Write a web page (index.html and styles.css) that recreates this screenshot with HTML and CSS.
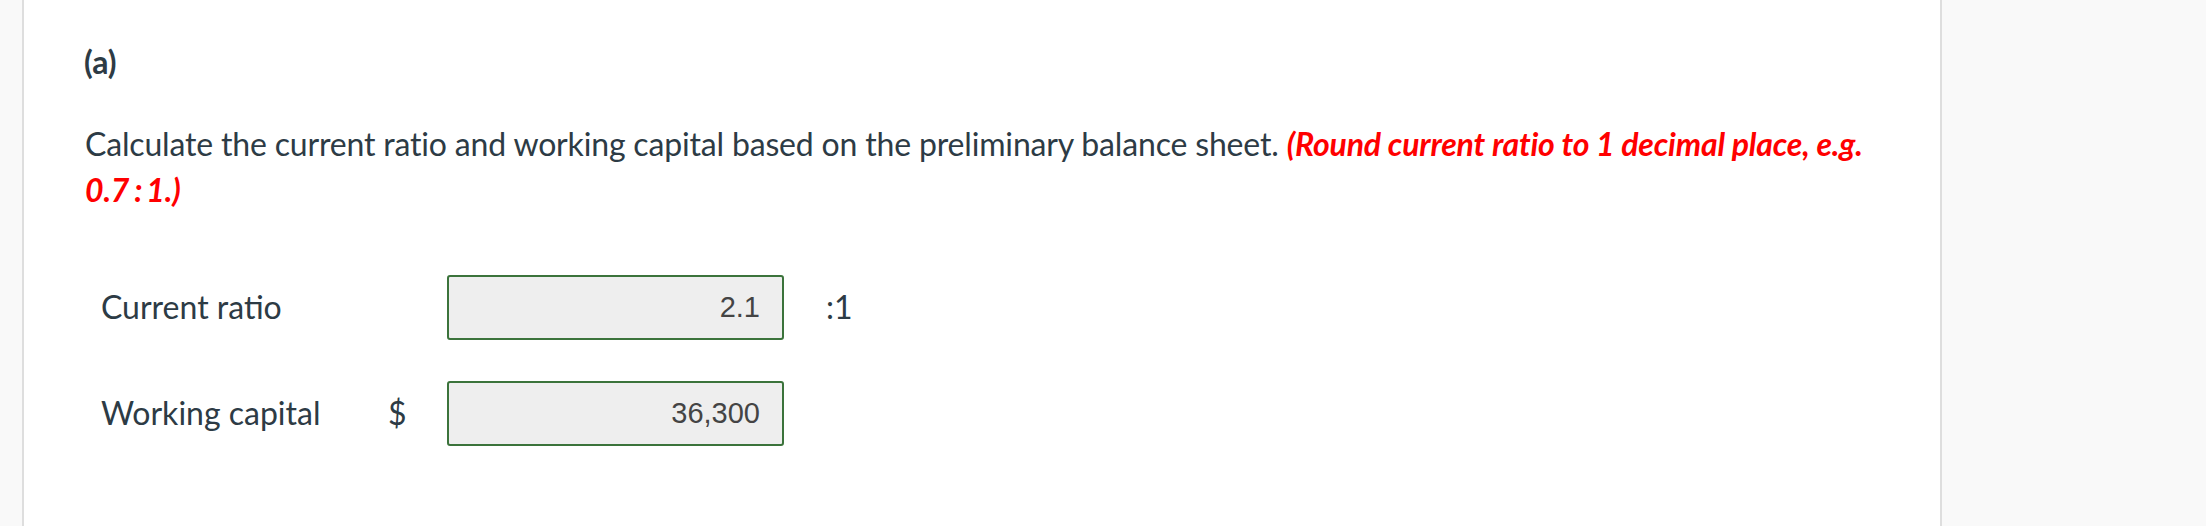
FILE: index.html
```html
<!DOCTYPE html>
<html>
<head>
<meta charset="utf-8">
<title>Current ratio</title>
<link rel="stylesheet" href="styles.css">
</head>
<body>
<div class="page">
  <div class="gutter left"></div>
  <div class="question">
    <h2 class="part">(a)</h2>
    <p class="prompt">Calculate the current ratio and working capital based on the preliminary balance sheet. <em class="hint">(Round current ratio to 1 decimal place, e.g. <span class="ratio">0.7<span class="colon">:</span>1.)</span></em></p>
    <div class="answers">
      <div class="label">Current ratio</div>
      <div class="unit"></div>
      <div class="field"><input type="text" value="2.1" readonly></div>
      <div class="suffix">:1</div>

      <div class="label">Working capital</div>
      <div class="unit">$</div>
      <div class="field"><input type="text" value="36,300" readonly></div>
      <div class="suffix"></div>
    </div>
  </div>
  <div class="gutter right"></div>
</div>
</body>
</html>
```

FILE: styles.css
```css
html, body { margin: 0; padding: 0; background: #fff; }
body { font: 32px/1.4 Lato, "Noto Sans", sans-serif; color: #2d3b45; }

.page { display: flex; height: 526px; }
.gutter { background: #f9f9f9; }
.gutter.left { width: 22px; border-right: 2px solid #dedede; }
.gutter.right { flex: 1; border-left: 2px solid #dedede; }

.question { width: 1856px; padding: 0 0 0 60px; }

.part { margin: 0; padding-top: 42px; font-size: 32px; font-weight: 700; line-height: 40px; }
.prompt { margin: 39px 0 0; font-size: 32px; line-height: 46px; padding-left: 1px; letter-spacing: -0.17px; }
.hint { color: #f00; font-weight: 700; font-style: italic; }
.ratio { white-space: nowrap; }
.colon { margin: 0 4px 0 5px; }

.answers {
  display: grid;
  grid-template-columns: 286px 60px 337px auto;
  row-gap: 41px;
  margin-top: 62px;
  padding-left: 17px;
  align-items: center;
}
.unit { padding-left: 1px; }
.field input {
  box-sizing: border-box;
  width: 337px; height: 65px;
  margin: 0; padding: 0 22px 0 10px;
  border: 2px solid #3b733b; border-radius: 3px;
  background: #eeeeee;
  font: 29px "Liberation Sans", Arial, sans-serif; color: #444;
  text-align: right;
}
.suffix { padding-left: 42px; }
```
